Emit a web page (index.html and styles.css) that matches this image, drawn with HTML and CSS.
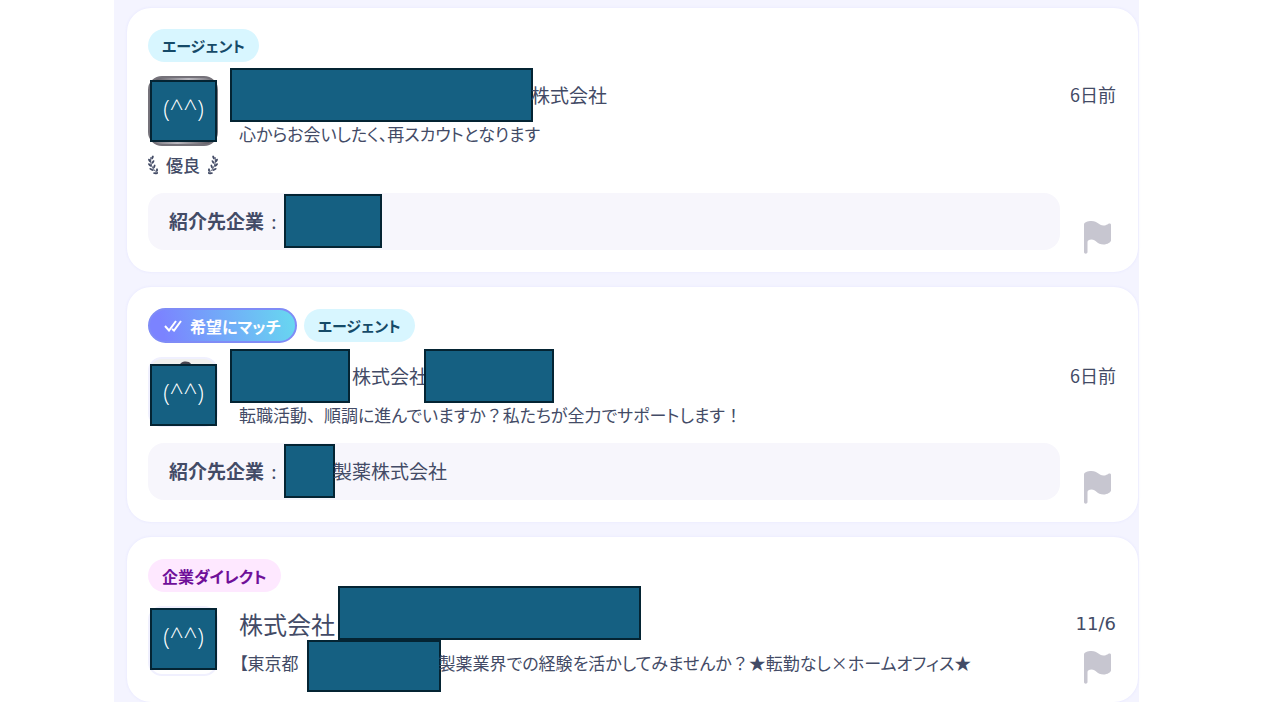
FILE: index.html
```html
<!DOCTYPE html>
<html lang="ja">

<head>
    <meta charset="UTF-8">
    <meta name="viewport" content="width=device-width, initial-scale=1.0">
    <title>スカウト一覧</title>
    <link rel="stylesheet" href="styles.css">
</head>

<body>

    <svg class="symbols" aria-hidden="true">
        <symbol id="flag" viewBox="0 0 28 34">
            <path d="M1 4.5C1 2.500 4.500 1 8.500 1C15 1 15.500 5.500 20.500 5.500C24 5.500 25 3.500 26.500 3.500C27.500 3.500 28 4 28 5V20.500C28 22 24.500 24.500 20.500 24.500C14 24.500 13 19.500 8.500 19.500C6 19.500 4.500 20.500 4.500 22V32C4.500 34.300 1 34.300 1 32Z" />
        </symbol>
        <symbol id="laurel" viewBox="0 0 12 20">
            <path d="M3 2C2 7 3 14 10 18" fill="none" stroke="currentColor" stroke-width="1" />
            <ellipse cx="4.500" cy="2.500" rx="1" ry="2" transform="rotate(25 4.500 2.500)" />
            <ellipse cx="1.500" cy="5.500" rx="1" ry="2" transform="rotate(-30 1.500 5.500)" />
            <ellipse cx="5" cy="7" rx="1" ry="2" transform="rotate(35 5 7)" />
            <ellipse cx="1.800" cy="10" rx="1" ry="2.200" transform="rotate(-45 1.800 10)" />
            <ellipse cx="6.300" cy="11.500" rx="1" ry="2" transform="rotate(20 6.300 11.500)" />
            <ellipse cx="3.500" cy="14.500" rx="1" ry="2.400" transform="rotate(-60 3.500 14.500)" />
            <ellipse cx="9" cy="15" rx="1" ry="1.800" />
            <ellipse cx="7.500" cy="18.200" rx="1" ry="2.500" transform="rotate(-85 7.500 18.200)" />
        </symbol>
    </svg>

    <main class="scout-list">

        <article class="card">
            <div class="tags">
                <span class="tag tag-agent">エージェント</span>
            </div>
            <div class="head">
                <div class="sender">
                    <div class="avatar avatar-metal">
                        <span class="face">(^^)</span>
                    </div>
                    <div class="rank">
                        <svg class="laurel"><use href="#laurel" /></svg>
                        <span>優良</span>
                        <svg class="laurel laurel-right"><use href="#laurel" /></svg>
                    </div>
                </div>
                <div class="message">
                    <h2 class="name"><span class="mask mask-wide"></span><span class="after-mask">株式会社</span></h2>
                    <p class="subject">心からお会いしたく、再スカウトとなります</p>
                </div>
                <div class="side">
                    <time class="date">6日前</time>
                </div>
            </div>
            <div class="foot">
                <div class="note">
                    <strong>紹介先企業</strong><span class="colon">:</span><span class="mask mask-small"></span>
                </div>
                <button class="flag-button" type="button" aria-label="フラグ"><svg class="flag"><use href="#flag" /></svg></button>
            </div>
        </article>

        <article class="card">
            <div class="tags">
                <span class="tag tag-match">
                    <svg class="checks" viewBox="0 0 18 12">
                        <path d="M1 6L5 10.500L12 1M8 9L10 10.500L17 1" />
                    </svg>
                    希望にマッチ
                </span>
                <span class="tag tag-agent">エージェント</span>
            </div>
            <div class="head">
                <div class="sender">
                    <div class="avatar avatar-photo">
                        <svg class="hair" viewBox="0 0 24 8">
                            <path d="M0 8C3 5 5 5 7 2C10 0 15 0 17 3C18 5 20 6 22 8Z" />
                        </svg>
                        <span class="face">(^^)</span>
                    </div>
                </div>
                <div class="message">
                    <h2 class="name"><span class="mask mask-medium"></span><span class="between">株式会社</span><span class="mask mask-branch"></span></h2>
                    <p class="subject">転職活動<span class="full">、</span>順調に進んでいますか<span class="full">？</span>私たちが全力でサポートします<span class="full">！</span></p>
                </div>
                <div class="side">
                    <time class="date">6日前</time>
                </div>
            </div>
            <div class="foot">
                <div class="note">
                    <strong>紹介先企業</strong><span class="colon">:</span><span class="mask mask-tiny"></span><span class="after-mask">製薬株式会社</span>
                </div>
                <button class="flag-button" type="button" aria-label="フラグ"><svg class="flag"><use href="#flag" /></svg></button>
            </div>
        </article>

        <article class="card card-direct">
            <div class="tags">
                <span class="tag tag-direct">企業ダイレクト</span>
            </div>
            <div class="head">
                <div class="sender">
                    <div class="avatar">
                        <span class="face">(^^)</span>
                    </div>
                </div>
                <div class="message">
                    <h2 class="name name-large"><span>株式会社</span><span class="mask mask-wide"></span></h2>
                    <p class="subject subject-masked"><span>【東京都</span><span class="mask mask-place"></span><span class="after-mask">製薬業界での経験を活かしてみませんか<span class="full">？</span>★転勤なし×ホームオフィス★</span></p>
                </div>
                <div class="side">
                    <time class="date date-numeric">11/6</time>
                    <button class="flag-button" type="button" aria-label="フラグ"><svg class="flag"><use href="#flag" /></svg></button>
                </div>
            </div>
        </article>

    </main>

</body>

</html>
```

FILE: styles.css
```css
* {
    box-sizing: border-box;
}

body {
    margin: 0;
    padding: 0 141px 0 114px;
    background-color: #fff;
    color: #434b66;
    font-family: "Noto Sans CJK JP", sans-serif;
    font-size: 19px;
}

.symbols {
    display: none;
}

.scout-list {
    display: flex;
    flex-direction: column;
    gap: 15px;
    padding: 8px 1px 0 13px;
    background-color: #f4f4ff;
}

.card {
    padding: 21px 22px 22px 21px;
    background-color: #fff;
    border-radius: 24px;
    box-shadow: 0 0 3px #e4e4ff;
}

.card-direct {
    padding-top: 22px;
    padding-bottom: 10px;
}

/* Tags */
.tags {
    display: flex;
    align-items: center;
    gap: 7px;
    margin-bottom: 6px;
}

.tag {
    display: flex;
    align-items: center;
    height: 33px;
    padding: 0 14px;
    border-radius: 18px;
    font-size: 16px;
    font-weight: 700;
    font-feature-settings: "palt";
}

.tag-agent {
    background-color: #d8f6ff;
    color: #154a68;
    font-size: 15px;
}

.tag-match {
    gap: 8px;
    height: 35px;
    border: 2px solid #7f8cf6;
    background: linear-gradient(75deg, #7b83ff 10%, #67d9f0);
    color: #fff;
}

.tag-direct {
    background-color: #fee8ff;
    color: #6f0f99;
}

.checks {
    width: 18px;
    height: 12px;
    fill: none;
    stroke: #fff;
    stroke-width: 2;
}

/* Sender, message and date */
.head {
    display: flex;
    gap: 12px;
}

.sender {
    width: 70px;
    padding-top: 8px;
}

.avatar {
    position: relative;
    height: 70px;
    border: 2px solid #f0f0fe;
    border-radius: 14px;
}

.avatar-metal {
    border-color: #75727a;
    background: linear-gradient(100deg, #55525a, #bbb9c0 50%, #4b4850);
}

.avatar-photo {
    background-color: #f0f0ee;
}

.hair {
    position: absolute;
    top: 2px;
    left: 24px;
    width: 24px;
    height: 8px;
    fill: #4a4650;
}

.face {
    position: absolute;
    top: 0;
    left: 0;
    width: 67px;
    height: 62px;
    border: 2px solid #042433;
    background-color: #156082;
    color: #fff;
    font-family: "Open Sans", sans-serif;
    font-size: 24px;
    font-weight: 300;
    line-height: 52px;
    text-align: center;
}

.avatar-metal .face {
    top: 2px;
}

.avatar-photo .face {
    top: 5px;
}

.rank {
    display: flex;
    align-items: center;
    justify-content: space-between;
    height: 22px;
    margin-top: 8px;
    margin-bottom: 1px;
    font-size: 17px;
    font-weight: 500;
    line-height: 20px;
}

.laurel {
    width: 12px;
    height: 20px;
    fill: currentColor;
}

.laurel-right {
    transform: scaleX(-1);
}

.message {
    flex: 1;
    min-width: 0;
}

.name {
    display: flex;
    align-items: center;
    margin: 0;
    font-size: 19px;
    font-weight: 400;
    line-height: 28px;
}

.name-large {
    align-items: flex-end;
    margin-top: -12px;
    padding-left: 9px;
    gap: 3px;
    font-size: 24px;
    line-height: 32px;
}

.subject {
    margin: 0;
    padding-left: 9px;
    font-size: 17px;
    font-feature-settings: "palt";
    line-height: 24px;
    white-space: nowrap;
}

.subject-masked {
    display: flex;
    line-height: 46px;
}

.full {
    font-feature-settings: normal;
}

.side {
    display: flex;
    flex-direction: column;
    align-items: flex-end;
}

.date {
    font-size: 18px;
    line-height: 52px;
    white-space: nowrap;
}

.date-numeric {
    font-family: "DejaVu Sans", sans-serif;
}

/* Introduced company */
.foot {
    display: flex;
    align-items: flex-end;
    gap: 22px;
    margin-top: 16px;
}

.note {
    display: flex;
    flex: 1;
    align-items: center;
    height: 57px;
    padding: 0 21px 2px;
    border-radius: 16px;
    background-color: #f7f6fc;
}

.colon {
    width: 20px;
    text-align: center;
}

.flag-button {
    height: 34px;
    margin: 0 4px -4px 0;
    padding: 0;
    border: 0;
    background: none;
}

.flag {
    display: block;
    width: 30px;
    height: 34px;
    fill: #c7c6d0;
}

/* Covered names */
.mask {
    flex: none;
    height: 54px;
    border: 2px solid #042433;
    background-color: #156082;
}

.mask-wide {
    width: 303px;
}

.mask-medium {
    width: 120px;
}

.mask-branch {
    width: 130px;
    margin-left: -4px;
}

.mask-small {
    width: 98px;
}

.mask-tiny {
    width: 51px;
}

.mask-place {
    width: 134px;
    height: 52px;
    margin-left: 8px;
}

.mask + .after-mask {
    margin-left: -2px;
}

.between {
    margin-left: 2px;
}
```
